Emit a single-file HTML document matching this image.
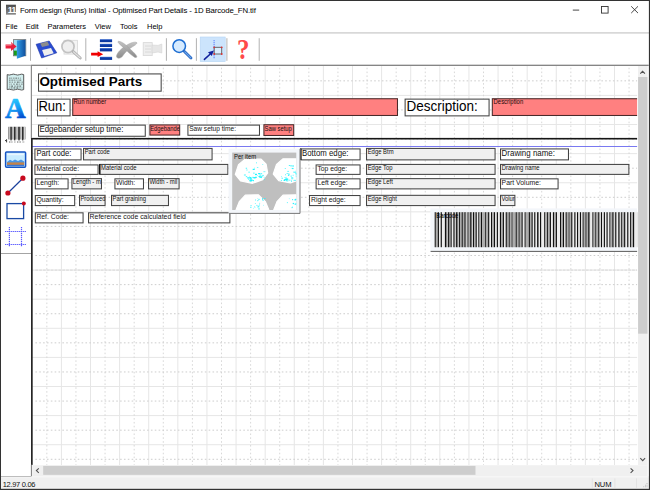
<!DOCTYPE html>
<html><head><meta charset="utf-8"><title>Form design (Runs) Initial - Optimised Part Details</title>
<style>
html,body{margin:0;padding:0;width:650px;height:490px;overflow:hidden;background:#fff;}
svg{display:block;position:absolute;left:0;top:0;font-family:"Liberation Sans",sans-serif;}
text{white-space:pre;}
</style></head><body>

<svg width="650" height="490" viewBox="0 0 650 490">
<defs>
<linearGradient id="gdoor" x1="0" y1="0" x2="1" y2="0"><stop offset="0" stop-color="#2f9ce6"/><stop offset="1" stop-color="#12509e"/></linearGradient>
<linearGradient id="gA" gradientUnits="userSpaceOnUse" x1="10" y1="98" x2="18" y2="118.5"><stop offset="0" stop-color="#2cd0ff"/><stop offset="0.55" stop-color="#169cf4"/><stop offset="1" stop-color="#0450d0"/></linearGradient>
<linearGradient id="gico" x1="0" y1="0" x2="0" y2="1"><stop offset="0" stop-color="#4a4a4a"/><stop offset="1" stop-color="#8c8c8c"/></linearGradient>
<linearGradient id="gx" x1="0" y1="0" x2="0" y2="1"><stop offset="0" stop-color="#c4c4c4"/><stop offset="1" stop-color="#8a8a8a"/></linearGradient>
<linearGradient id="gbar" x1="0" y1="0" x2="0" y2="1"><stop offset="0" stop-color="#3a6ad0"/><stop offset="0.4" stop-color="#0c3ca8"/><stop offset="1" stop-color="#0a3498"/></linearGradient>
<clipPath id="canvas"><rect x="32" y="65.5" width="605.6" height="399.4"/></clipPath>
<clipPath id="imgclip"><rect x="232.2" y="152.6" width="64.1" height="57.4"/></clipPath>
</defs>
<rect x="0" y="0" width="650" height="490" fill="#fff"/>
<g clip-path="url(#canvas)">
<g stroke="#e6e6e6" stroke-width="1" fill="none">
<line x1="61.40" y1="66" x2="61.40" y2="465"/>
<line x1="90.51" y1="66" x2="90.51" y2="465"/>
<line x1="119.62" y1="66" x2="119.62" y2="465"/>
<line x1="148.73" y1="66" x2="148.73" y2="465"/>
<line x1="177.84" y1="66" x2="177.84" y2="465"/>
<line x1="206.95" y1="66" x2="206.95" y2="465"/>
<line x1="236.06" y1="66" x2="236.06" y2="465"/>
<line x1="265.17" y1="66" x2="265.17" y2="465"/>
<line x1="294.28" y1="66" x2="294.28" y2="465"/>
<line x1="323.39" y1="66" x2="323.39" y2="465"/>
<line x1="352.50" y1="66" x2="352.50" y2="465"/>
<line x1="381.61" y1="66" x2="381.61" y2="465"/>
<line x1="410.72" y1="66" x2="410.72" y2="465"/>
<line x1="439.83" y1="66" x2="439.83" y2="465"/>
<line x1="468.94" y1="66" x2="468.94" y2="465"/>
<line x1="498.05" y1="66" x2="498.05" y2="465"/>
<line x1="527.16" y1="66" x2="527.16" y2="465"/>
<line x1="556.27" y1="66" x2="556.27" y2="465"/>
<line x1="585.38" y1="66" x2="585.38" y2="465"/>
<line x1="614.49" y1="66" x2="614.49" y2="465"/>
<line x1="32" y1="95.41" x2="638" y2="95.41"/>
<line x1="32" y1="124.52" x2="638" y2="124.52"/>
<line x1="32" y1="153.63" x2="638" y2="153.63"/>
<line x1="32" y1="182.74" x2="638" y2="182.74"/>
<line x1="32" y1="211.85" x2="638" y2="211.85"/>
<line x1="32" y1="240.96" x2="638" y2="240.96"/>
<line x1="32" y1="270.07" x2="638" y2="270.07"/>
<line x1="32" y1="299.18" x2="638" y2="299.18"/>
<line x1="32" y1="328.29" x2="638" y2="328.29"/>
<line x1="32" y1="357.40" x2="638" y2="357.40"/>
<line x1="32" y1="386.51" x2="638" y2="386.51"/>
<line x1="32" y1="415.62" x2="638" y2="415.62"/>
<line x1="32" y1="444.73" x2="638" y2="444.73"/>
</g>
<g stroke="#d8d8d8" stroke-width="1" fill="none" stroke-dasharray="1.6 2.25" stroke-dashoffset="-1.2">
<line x1="46.84" y1="66.5" x2="46.84" y2="465"/>
<line x1="75.95" y1="66.5" x2="75.95" y2="465"/>
<line x1="105.06" y1="66.5" x2="105.06" y2="465"/>
<line x1="134.18" y1="66.5" x2="134.18" y2="465"/>
<line x1="163.29" y1="66.5" x2="163.29" y2="465"/>
<line x1="192.40" y1="66.5" x2="192.40" y2="465"/>
<line x1="221.51" y1="66.5" x2="221.51" y2="465"/>
<line x1="250.62" y1="66.5" x2="250.62" y2="465"/>
<line x1="279.73" y1="66.5" x2="279.73" y2="465"/>
<line x1="308.84" y1="66.5" x2="308.84" y2="465"/>
<line x1="337.95" y1="66.5" x2="337.95" y2="465"/>
<line x1="367.06" y1="66.5" x2="367.06" y2="465"/>
<line x1="396.17" y1="66.5" x2="396.17" y2="465"/>
<line x1="425.28" y1="66.5" x2="425.28" y2="465"/>
<line x1="454.39" y1="66.5" x2="454.39" y2="465"/>
<line x1="483.50" y1="66.5" x2="483.50" y2="465"/>
<line x1="512.61" y1="66.5" x2="512.61" y2="465"/>
<line x1="541.72" y1="66.5" x2="541.72" y2="465"/>
<line x1="570.83" y1="66.5" x2="570.83" y2="465"/>
<line x1="599.94" y1="66.5" x2="599.94" y2="465"/>
<line x1="629.05" y1="66.5" x2="629.05" y2="465"/>
</g>
<g stroke="#cdcdcd" stroke-width="1" fill="none" stroke-dasharray="1.6 2.25" stroke-dashoffset="-1.2">
<line x1="34.2" y1="80.85" x2="638" y2="80.85"/>
<line x1="34.2" y1="109.96" x2="638" y2="109.96"/>
<line x1="34.2" y1="139.07" x2="638" y2="139.07"/>
<line x1="34.2" y1="168.19" x2="638" y2="168.19"/>
<line x1="34.2" y1="197.30" x2="638" y2="197.30"/>
<line x1="34.2" y1="226.41" x2="638" y2="226.41"/>
<line x1="34.2" y1="255.52" x2="638" y2="255.52"/>
<line x1="34.2" y1="284.63" x2="638" y2="284.63"/>
<line x1="34.2" y1="313.74" x2="638" y2="313.74"/>
<line x1="34.2" y1="342.85" x2="638" y2="342.85"/>
<line x1="34.2" y1="371.96" x2="638" y2="371.96"/>
<line x1="34.2" y1="401.07" x2="638" y2="401.07"/>
<line x1="34.2" y1="430.18" x2="638" y2="430.18"/>
<line x1="34.2" y1="459.29" x2="638" y2="459.29"/>
<line x1="34.2" y1="270.07" x2="638" y2="270.07" stroke="#c4c4c4" stroke-width="0.6" stroke-dasharray="2.6 1.25"/>
</g>
<rect x="38.52" y="73.93" width="122.65" height="17.25" fill="#fff" stroke="#444" stroke-width="1.05"/>
<text transform="translate(39.40 85.80) scale(0.988 1)" font-size="13.6" fill="#000" font-weight="bold">Optimised Parts</text>
<rect x="37.52" y="99.12" width="32.55" height="16.75" fill="#fff" stroke="#444" stroke-width="1.05"/>
<text transform="translate(38.40 110.90) scale(0.94 1)" font-size="13.9" fill="#000">Run:</text>
<rect x="72.73" y="98.73" width="324.75" height="16.75" fill="#ff8080" stroke="#4a2a2a" stroke-width="1.05"/>
<text transform="translate(73.60 103.80) scale(0.94 1)" font-size="6.3" fill="#200808">Run number</text>
<rect x="405.12" y="99.12" width="83.95" height="16.75" fill="#fff" stroke="#444" stroke-width="1.05"/>
<text transform="translate(406.60 110.90) scale(0.968 1)" font-size="13.95" fill="#000">Description:</text>
<rect x="492.32" y="98.73" width="167.15" height="16.75" fill="#ff8080" stroke="#4a2a2a" stroke-width="1.05"/>
<text transform="translate(493.60 103.80) scale(0.94 1)" font-size="6.3" fill="#200808">Description</text>
<rect x="38.52" y="125.12" width="106.75" height="11.15" fill="#fff" stroke="#444" stroke-width="1.05"/>
<text transform="translate(39.40 131.90) scale(0.93 1)" font-size="8.53" fill="#111">Edgebander setup time:</text>
<rect x="149.93" y="124.92" width="29.75" height="10.15" fill="#ff8080" stroke="#4a2a2a" stroke-width="1.05"/>
<clipPath id="c1"><rect x="150.4" y="124.6" width="29.20" height="10.599999999999994"/></clipPath>
<g clip-path="url(#c1)">
<text transform="translate(150.20 130.60) scale(0.93 1)" font-size="6.29" fill="#101010">Edgebande</text>
</g>
<rect x="187.93" y="125.12" width="71.55" height="10.15" fill="#fff" stroke="#444" stroke-width="1.05"/>
<text transform="translate(189.20 130.60) scale(0.97 1)" font-size="6.8" fill="#151515">Saw setup time:</text>
<rect x="263.92" y="124.73" width="29.75" height="10.75" fill="#ff8080" stroke="#4a2a2a" stroke-width="1.05"/>
<clipPath id="c2"><rect x="264.4" y="124.4" width="29.20" height="11.199999999999989"/></clipPath>
<g clip-path="url(#c2)">
<text transform="translate(264.50 130.60) scale(0.93 1)" font-size="6.29" fill="#101010">Saw setup</text>
</g>
<rect x="32" y="137.9" width="606" height="1.6" fill="#161616"/>
<rect x="32" y="146.1" width="606" height="0.9" fill="#6a6af0"/>
<rect x="34.92" y="148.93" width="46.15" height="10.95" fill="#fff" stroke="#444" stroke-width="1.05"/>
<text transform="translate(36.40 155.90) scale(0.93 1)" font-size="8.28" fill="#111">Part code:</text>
<rect x="83.53" y="148.43" width="128.55" height="11.45" fill="#f0f0f0" stroke="#444" stroke-width="1.05"/>
<clipPath id="c3"><rect x="84" y="148.1" width="128.00" height="11.900000000000006"/></clipPath>
<g clip-path="url(#c3)">
<text transform="translate(84.70 153.70) scale(0.93 1)" font-size="6.34" fill="#101010">Part code</text>
</g>
<rect x="34.92" y="164.93" width="63.15" height="9.45" fill="#fff" stroke="#444" stroke-width="1.05"/>
<text transform="translate(36.40 171.00) scale(0.97 1)" font-size="7.01" fill="#151515">Material code:</text>
<rect x="99.93" y="164.43" width="127.95" height="9.95" fill="#f0f0f0" stroke="#444" stroke-width="1.05"/>
<clipPath id="c4"><rect x="100.4" y="164.1" width="127.40" height="10.400000000000006"/></clipPath>
<g clip-path="url(#c4)">
<text transform="translate(101.10 169.70) scale(0.93 1)" font-size="6.34" fill="#101010">Material code</text>
</g>
<rect x="99" y="164.1" width="1.3" height="10.4" fill="#111"/>
<rect x="35.32" y="178.83" width="32.75" height="10.05" fill="#fff" stroke="#444" stroke-width="1.05"/>
<text transform="translate(36.40 184.70) scale(0.97 1)" font-size="7.01" fill="#151515">Length:</text>
<rect x="71.93" y="178.63" width="29.55" height="10.25" fill="#f0f0f0" stroke="#444" stroke-width="1.05"/>
<clipPath id="c5"><rect x="72.4" y="178.3" width="29.00" height="10.699999999999989"/></clipPath>
<g clip-path="url(#c5)">
<text transform="translate(72.70 183.90) scale(0.93 1)" font-size="6.34" fill="#101010">Length - m</text>
</g>
<rect x="114.93" y="178.83" width="28.55" height="10.05" fill="#fff" stroke="#444" stroke-width="1.05"/>
<text transform="translate(116.00 184.70) scale(0.97 1)" font-size="7.01" fill="#151515">Width:</text>
<rect x="148.53" y="178.63" width="30.55" height="10.25" fill="#f0f0f0" stroke="#444" stroke-width="1.05"/>
<clipPath id="c6"><rect x="149" y="178.3" width="30.00" height="10.699999999999989"/></clipPath>
<g clip-path="url(#c6)">
<text transform="translate(149.50 183.90) scale(0.93 1)" font-size="6.34" fill="#101010">Width - mil</text>
</g>
<rect x="35.32" y="195.53" width="39.35" height="10.05" fill="#fff" stroke="#444" stroke-width="1.05"/>
<text transform="translate(36.40 201.60) scale(0.97 1)" font-size="7.01" fill="#151515">Quantity:</text>
<rect x="79.53" y="195.33" width="25.55" height="10.25" fill="#f0f0f0" stroke="#444" stroke-width="1.05"/>
<clipPath id="c7"><rect x="80" y="195" width="25.00" height="10.699999999999989"/></clipPath>
<g clip-path="url(#c7)">
<text transform="translate(80.40 200.60) scale(0.93 1)" font-size="6.34" fill="#101010">Produced</text>
</g>
<rect x="111.53" y="195.33" width="56.95" height="10.25" fill="#f0f0f0" stroke="#444" stroke-width="1.05"/>
<clipPath id="c8"><rect x="112" y="195" width="56.40" height="10.699999999999989"/></clipPath>
<g clip-path="url(#c8)">
<text transform="translate(112.60 200.60) scale(0.93 1)" font-size="6.34" fill="#101010">Part graining</text>
</g>
<rect x="35.32" y="212.83" width="47.75" height="10.05" fill="#fff" stroke="#444" stroke-width="1.05"/>
<text transform="translate(36.40 218.70) scale(0.97 1)" font-size="7.01" fill="#151515">Ref. Code:</text>
<rect x="88.53" y="212.83" width="141.35" height="10.05" fill="#fff" stroke="#444" stroke-width="1.05"/>
<text transform="translate(89.60 218.70) scale(0.97 1)" font-size="7.11" fill="#151515">Reference code calculated field</text>
<rect x="300.92" y="148.93" width="59.15" height="10.95" fill="#fff" stroke="#444" stroke-width="1.05"/>
<text transform="translate(302.00 155.90) scale(0.93 1)" font-size="8.42" fill="#111">Bottom edge:</text>
<rect x="299.9" y="148.4" width="1.5" height="11.6" fill="#111"/>
<rect x="366.52" y="148.43" width="128.55" height="11.45" fill="#f0f0f0" stroke="#444" stroke-width="1.05"/>
<clipPath id="c9"><rect x="367" y="148.1" width="128.00" height="11.900000000000006"/></clipPath>
<g clip-path="url(#c9)">
<text transform="translate(367.70 153.70) scale(0.93 1)" font-size="6.34" fill="#101010">Edge Btm</text>
</g>
<rect x="316.12" y="164.93" width="43.95" height="9.45" fill="#fff" stroke="#444" stroke-width="1.05"/>
<text transform="translate(317.40 171.00) scale(0.97 1)" font-size="7.01" fill="#151515">Top edge:</text>
<rect x="366.52" y="164.43" width="128.55" height="9.95" fill="#f0f0f0" stroke="#444" stroke-width="1.05"/>
<clipPath id="c10"><rect x="367" y="164.1" width="128.00" height="10.400000000000006"/></clipPath>
<g clip-path="url(#c10)">
<text transform="translate(367.70 169.70) scale(0.93 1)" font-size="6.34" fill="#101010">Edge Top</text>
</g>
<rect x="316.12" y="178.83" width="43.95" height="10.05" fill="#fff" stroke="#444" stroke-width="1.05"/>
<text transform="translate(317.40 184.70) scale(0.97 1)" font-size="7.01" fill="#151515">Left edge:</text>
<rect x="366.52" y="178.63" width="128.55" height="10.25" fill="#f0f0f0" stroke="#444" stroke-width="1.05"/>
<clipPath id="c11"><rect x="367" y="178.3" width="128.00" height="10.699999999999989"/></clipPath>
<g clip-path="url(#c11)">
<text transform="translate(367.70 183.90) scale(0.93 1)" font-size="6.34" fill="#101010">Edge Left</text>
</g>
<rect x="309.52" y="195.53" width="50.55" height="10.05" fill="#fff" stroke="#444" stroke-width="1.05"/>
<text transform="translate(311.00 201.60) scale(0.97 1)" font-size="7.01" fill="#151515">Right edge:</text>
<rect x="366.52" y="195.33" width="128.55" height="10.25" fill="#f0f0f0" stroke="#444" stroke-width="1.05"/>
<clipPath id="c12"><rect x="367" y="195" width="128.00" height="10.699999999999989"/></clipPath>
<g clip-path="url(#c12)">
<text transform="translate(367.70 200.60) scale(0.93 1)" font-size="6.34" fill="#101010">Edge Right</text>
</g>
<rect x="500.52" y="148.93" width="67.95" height="10.95" fill="#fff" stroke="#444" stroke-width="1.05"/>
<text transform="translate(501.60 155.90) scale(0.93 1)" font-size="8.54" fill="#111">Drawing name:</text>
<rect x="500.52" y="164.43" width="128.35" height="9.95" fill="#f0f0f0" stroke="#444" stroke-width="1.05"/>
<clipPath id="c13"><rect x="501" y="164.1" width="127.80" height="10.400000000000006"/></clipPath>
<g clip-path="url(#c13)">
<text transform="translate(501.70 169.70) scale(0.93 1)" font-size="6.34" fill="#101010">Drawing name</text>
</g>
<rect x="500.52" y="178.83" width="57.55" height="10.05" fill="#fff" stroke="#444" stroke-width="1.05"/>
<text transform="translate(501.60 184.70) scale(0.97 1)" font-size="7.09" fill="#151515">Part Volume:</text>
<rect x="500.52" y="195.33" width="14.35" height="10.25" fill="#f0f0f0" stroke="#444" stroke-width="1.05"/>
<clipPath id="c14"><rect x="501" y="195" width="13.80" height="10.699999999999989"/></clipPath>
<g clip-path="url(#c14)">
<text transform="translate(501.40 200.60) scale(0.93 1)" font-size="6.34" fill="#101010">Volur</text>
</g>
<rect x="228.6" y="148.7" width="71.7" height="65.1" fill="#f3f6fa"/>
<path d="M229 213.4 H300 V149" fill="none" stroke="#6a6a6a" stroke-width="0.9"/>
<rect x="232.2" y="152.6" width="64.1" height="57.4" fill="#bfbfbf"/>
<g clip-path="url(#imgclip)">
<path d="M235.3 174.4 L238.5 164.8 L245.1 159.2 L261.1 159.2 L266.1 164.1 L267.7 173.0 L262.8 179.6 L252.5 183.3 L240.7 181.0Z" fill="#fff" stroke="#fff" stroke-width="1.2" stroke-linejoin="round"/>
<g fill="#20f4ff"><rect x="248.6" y="178.8" width="0.9" height="0.6"/><rect x="261.2" y="177.3" width="0.6" height="0.8"/><rect x="248.6" y="171.6" width="0.9" height="1.2"/><rect x="249.3" y="177.2" width="1.4" height="1.2"/><rect x="255.0" y="176.9" width="2.0" height="0.8"/><rect x="263.4" y="171.5" width="2.0" height="0.6"/><rect x="249.0" y="175.9" width="0.6" height="0.6"/><rect x="253.2" y="172.7" width="1.4" height="0.8"/><rect x="246.2" y="169.7" width="1.4" height="0.6"/><rect x="254.1" y="177.1" width="2.0" height="1.2"/><rect x="258.1" y="173.2" width="0.9" height="0.8"/><rect x="245.8" y="176.3" width="1.4" height="0.8"/><rect x="250.1" y="180.1" width="2.0" height="1.2"/><rect x="262.7" y="174.9" width="0.9" height="0.8"/><rect x="243.9" y="174.6" width="2.0" height="0.8"/><rect x="251.4" y="179.1" width="0.9" height="1.2"/><rect x="260.1" y="176.5" width="2.0" height="1.2"/><rect x="256.4" y="162.2" width="0.6" height="1.2"/><rect x="248.3" y="179.3" width="0.9" height="0.6"/><rect x="257.4" y="175.1" width="0.6" height="0.6"/><rect x="254.0" y="167.7" width="0.6" height="0.8"/><rect x="250.6" y="179.3" width="0.9" height="0.8"/><rect x="259.0" y="173.4" width="0.9" height="0.6"/><rect x="256.9" y="167.4" width="1.4" height="0.6"/><rect x="247.2" y="177.3" width="2.0" height="1.2"/><rect x="261.3" y="173.5" width="0.9" height="0.8"/><rect x="259.3" y="176.4" width="0.9" height="0.8"/><rect x="249.5" y="177.4" width="1.4" height="0.8"/><rect x="259.1" y="177.2" width="0.6" height="0.8"/><rect x="253.6" y="178.4" width="0.9" height="0.6"/><rect x="259.5" y="176.0" width="0.9" height="0.8"/><rect x="252.5" y="176.8" width="0.9" height="1.2"/><rect x="250.1" y="177.4" width="0.9" height="1.2"/><rect x="261.5" y="176.2" width="0.9" height="0.8"/><rect x="252.7" y="168.8" width="2.0" height="1.2"/><rect x="253.0" y="180.0" width="0.9" height="1.2"/><rect x="259.6" y="174.7" width="1.4" height="0.8"/><rect x="245.7" y="167.8" width="1.4" height="0.8"/><rect x="249.4" y="180.6" width="2.0" height="0.8"/><rect x="258.9" y="175.7" width="0.6" height="1.2"/><rect x="255.0" y="173.8" width="2.0" height="1.2"/><rect x="250.8" y="180.2" width="2.0" height="0.8"/><rect x="263.7" y="176.9" width="0.9" height="0.6"/><rect x="258.5" y="173.1" width="2.0" height="1.2"/><rect x="250.0" y="177.6" width="2.0" height="0.6"/><rect x="255.7" y="175.6" width="0.6" height="0.8"/><rect x="253.1" y="177.2" width="2.0" height="0.8"/><rect x="250.7" y="178.4" width="1.4" height="0.6"/><rect x="261.6" y="175.5" width="2.0" height="0.6"/><rect x="263.9" y="178.9" width="0.6" height="1.2"/><rect x="249.4" y="180.1" width="1.4" height="0.8"/><rect x="260.5" y="176.8" width="0.9" height="1.2"/><rect x="262.3" y="164.2" width="0.9" height="0.6"/><rect x="250.1" y="179.3" width="0.9" height="0.8"/><rect x="261.0" y="173.1" width="0.6" height="0.8"/><rect x="258.3" y="176.1" width="2.0" height="0.6"/></g>
<path d="M273.3 174.0 L276.5 164.4 L283.1 158.8 L299.1 158.8 L304.1 163.7 L305.7 172.6 L300.8 179.2 L290.5 182.9 L278.7 180.6Z" fill="#fff" stroke="#fff" stroke-width="1.2" stroke-linejoin="round"/>
<g fill="#20f4ff"><rect x="286.2" y="178.4" width="1.4" height="0.6"/><rect x="296.4" y="176.1" width="0.6" height="0.8"/><rect x="292.4" y="165.4" width="1.4" height="1.2"/><rect x="284.8" y="179.1" width="1.4" height="1.2"/><rect x="297.2" y="174.4" width="2.0" height="0.6"/><rect x="286.5" y="173.3" width="2.0" height="0.6"/><rect x="290.5" y="175.7" width="1.4" height="0.8"/><rect x="301.0" y="176.9" width="0.9" height="1.2"/><rect x="288.5" y="179.8" width="2.0" height="0.6"/><rect x="281.7" y="177.7" width="0.9" height="1.2"/><rect x="294.6" y="172.1" width="2.0" height="0.6"/><rect x="287.4" y="170.9" width="1.4" height="0.8"/><rect x="285.2" y="179.0" width="2.0" height="1.2"/><rect x="299.0" y="174.4" width="0.6" height="0.6"/><rect x="284.8" y="168.2" width="0.9" height="0.8"/><rect x="286.3" y="180.7" width="2.0" height="0.6"/><rect x="298.1" y="174.8" width="0.6" height="0.8"/><rect x="291.1" y="177.6" width="2.0" height="0.6"/><rect x="291.3" y="177.7" width="2.0" height="0.8"/><rect x="299.6" y="176.0" width="1.4" height="0.6"/><rect x="295.4" y="170.8" width="0.6" height="0.8"/><rect x="286.9" y="178.8" width="0.9" height="1.2"/><rect x="296.9" y="175.7" width="0.6" height="1.2"/><rect x="285.1" y="174.4" width="0.9" height="0.8"/><rect x="284.3" y="179.4" width="0.6" height="0.8"/><rect x="295.4" y="173.4" width="2.0" height="0.6"/><rect x="293.7" y="179.8" width="0.9" height="1.2"/><rect x="286.3" y="178.1" width="0.9" height="0.6"/><rect x="295.7" y="176.4" width="0.6" height="0.8"/><rect x="287.9" y="174.6" width="1.4" height="1.2"/><rect x="297.0" y="172.3" width="0.9" height="0.6"/><rect x="288.6" y="173.6" width="0.9" height="1.2"/><rect x="284.4" y="179.0" width="0.9" height="0.8"/><rect x="302.0" y="171.4" width="2.0" height="1.2"/><rect x="283.6" y="179.8" width="1.4" height="1.2"/><rect x="284.6" y="177.1" width="0.9" height="0.8"/><rect x="295.7" y="173.2" width="2.0" height="1.2"/><rect x="299.5" y="173.0" width="2.0" height="0.8"/><rect x="285.1" y="178.5" width="0.9" height="0.6"/><rect x="297.6" y="173.5" width="0.6" height="0.6"/><rect x="281.0" y="176.3" width="0.6" height="0.8"/><rect x="299.2" y="173.7" width="2.0" height="1.2"/><rect x="290.2" y="165.5" width="2.0" height="0.8"/><rect x="286.4" y="179.8" width="0.9" height="1.2"/><rect x="295.1" y="179.8" width="0.6" height="1.2"/><rect x="293.2" y="171.7" width="2.0" height="0.8"/><rect x="291.0" y="180.5" width="0.9" height="1.2"/><rect x="295.8" y="174.0" width="2.0" height="0.6"/><rect x="288.8" y="165.0" width="1.4" height="0.8"/><rect x="280.9" y="180.2" width="0.9" height="0.8"/><rect x="299.7" y="173.0" width="2.0" height="0.6"/><rect x="291.7" y="179.4" width="0.6" height="0.6"/><rect x="285.8" y="176.9" width="0.9" height="0.6"/><rect x="292.7" y="174.8" width="0.9" height="0.8"/><rect x="292.1" y="167.9" width="1.4" height="1.2"/><rect x="287.6" y="178.8" width="0.9" height="0.6"/><rect x="295.7" y="174.9" width="0.9" height="0.6"/><rect x="290.9" y="167.9" width="0.6" height="0.6"/></g>
<path d="M236.1 209.6 L239.3 201.6 L245.3 195.2 L258.3 194.8 L262.3 198.6 L265.3 201.6 L268.7 209.6 L268.7 214.6 L236.1 214.6Z" fill="#fff" stroke="#fff" stroke-width="1.2" stroke-linejoin="round"/>
<g fill="#22f0ff"><rect x="257.4" y="206.6" width="0.9" height="0.8"/><rect x="254.2" y="206.4" width="0.6" height="0.8"/><rect x="259.0" y="198.9" width="0.9" height="0.6"/><rect x="262.1" y="198.3" width="0.9" height="1.2"/><rect x="250.1" y="206.8" width="1.4" height="0.8"/><rect x="259.1" y="204.4" width="0.6" height="1.2"/><rect x="262.0" y="198.4" width="0.6" height="1.2"/><rect x="258.4" y="199.2" width="0.6" height="1.2"/><rect x="257.6" y="198.0" width="0.6" height="0.6"/><rect x="257.5" y="200.0" width="0.6" height="1.2"/><rect x="254.7" y="206.8" width="0.6" height="0.8"/><rect x="258.3" y="208.6" width="1.4" height="0.8"/><rect x="250.6" y="205.2" width="0.9" height="0.8"/><rect x="253.2" y="207.9" width="0.6" height="0.6"/><rect x="254.9" y="203.3" width="0.9" height="0.6"/><rect x="258.0" y="206.4" width="1.4" height="0.8"/><rect x="257.6" y="205.5" width="0.9" height="0.8"/><rect x="264.1" y="198.1" width="1.4" height="0.8"/><rect x="256.4" y="204.9" width="0.9" height="0.8"/><rect x="263.2" y="204.9" width="0.6" height="0.6"/><rect x="258.7" y="207.9" width="0.6" height="0.6"/><rect x="262.6" y="199.7" width="0.9" height="1.2"/><rect x="255.1" y="199.6" width="0.9" height="0.8"/><rect x="259.2" y="202.9" width="0.9" height="0.6"/></g>
<path d="M273.8 209.6 L277.0 201.6 L283.0 195.2 L296.0 194.8 L300.0 198.6 L303.0 201.6 L306.4 209.6 L306.4 214.6 L273.8 214.6Z" fill="#fff" stroke="#fff" stroke-width="1.2" stroke-linejoin="round"/>
<g fill="#22f0ff"><rect x="295.0" y="203.8" width="0.9" height="0.6"/><rect x="296.7" y="199.1" width="0.6" height="1.2"/><rect x="294.7" y="199.4" width="0.9" height="1.2"/><rect x="301.0" y="199.2" width="1.4" height="1.2"/><rect x="296.6" y="201.3" width="1.4" height="0.8"/><rect x="286.9" y="202.3" width="0.9" height="0.8"/><rect x="288.9" y="198.5" width="0.6" height="0.6"/><rect x="292.2" y="199.0" width="0.9" height="1.2"/><rect x="294.7" y="199.1" width="0.9" height="1.2"/><rect x="296.4" y="204.5" width="0.9" height="0.8"/><rect x="295.7" y="202.8" width="0.9" height="1.2"/><rect x="299.7" y="202.3" width="0.9" height="0.6"/><rect x="292.7" y="202.9" width="1.4" height="1.2"/><rect x="299.4" y="206.7" width="1.4" height="0.8"/><rect x="297.1" y="202.3" width="0.9" height="0.6"/><rect x="295.2" y="198.8" width="1.4" height="1.2"/><rect x="294.7" y="203.7" width="0.9" height="1.2"/><rect x="292.2" y="206.6" width="0.6" height="1.2"/><rect x="291.3" y="207.5" width="1.4" height="0.6"/><rect x="300.2" y="201.6" width="0.9" height="0.8"/><rect x="296.6" y="203.6" width="1.4" height="0.8"/></g>
</g>
<text transform="translate(234.10 158.50) scale(0.93 1)" font-size="6.4" fill="#101010">Per item</text>
<rect x="430.4" y="208.4" width="208" height="43.2" fill="#f3f6fa"/>
<rect x="430.6" y="250.9" width="208" height="1" fill="#5c5c5c"/>
<rect x="434.6" y="212.2" width="204" height="35" fill="#ececec"/>
<g><rect x="434.70" y="212.2" width="1.15" height="35" fill="#101010"/><rect x="435.85" y="212.2" width="1.95" height="35" fill="#acacac"/><rect x="437.80" y="212.2" width="1.15" height="35" fill="#101010"/><rect x="440.70" y="212.2" width="1.15" height="35" fill="#101010"/><rect x="444.90" y="212.2" width="1.15" height="35" fill="#101010"/><rect x="446.05" y="212.2" width="0.7" height="35" fill="#606060"/><rect x="447.80" y="212.2" width="1.15" height="35" fill="#101010"/><rect x="448.95" y="212.2" width="0.7" height="35" fill="#606060"/><rect x="450.50" y="212.2" width="1.15" height="35" fill="#101010"/><rect x="453.40" y="212.2" width="1.15" height="35" fill="#101010"/><rect x="454.55" y="212.2" width="0.7" height="35" fill="#606060"/><rect x="456.10" y="212.2" width="1.15" height="35" fill="#101010"/><rect x="457.25" y="212.2" width="0.7" height="35" fill="#606060"/><rect x="458.80" y="212.2" width="1.15" height="35" fill="#101010"/><rect x="459.95" y="212.2" width="1.75" height="35" fill="#acacac"/><rect x="461.70" y="212.2" width="1.15" height="35" fill="#101010"/><rect x="462.85" y="212.2" width="1.55" height="35" fill="#acacac"/><rect x="464.40" y="212.2" width="1.15" height="35" fill="#101010"/><rect x="465.55" y="212.2" width="0.7" height="35" fill="#606060"/><rect x="467.50" y="212.2" width="1.15" height="35" fill="#101010"/><rect x="468.65" y="212.2" width="1.55" height="35" fill="#acacac"/><rect x="470.20" y="212.2" width="1.15" height="35" fill="#101010"/><rect x="471.35" y="212.2" width="0.7" height="35" fill="#606060"/><rect x="472.90" y="212.2" width="1.15" height="35" fill="#101010"/><rect x="474.05" y="212.2" width="1.55" height="35" fill="#acacac"/><rect x="475.60" y="212.2" width="1.15" height="35" fill="#101010"/><rect x="478.30" y="212.2" width="1.15" height="35" fill="#101010"/><rect x="479.45" y="212.2" width="1.55" height="35" fill="#acacac"/><rect x="481.00" y="212.2" width="1.15" height="35" fill="#101010"/><rect x="482.15" y="212.2" width="3.05" height="35" fill="#acacac"/><rect x="485.20" y="212.2" width="1.15" height="35" fill="#101010"/><rect x="486.35" y="212.2" width="1.75" height="35" fill="#acacac"/><rect x="488.10" y="212.2" width="1.15" height="35" fill="#101010"/><rect x="491.00" y="212.2" width="1.15" height="35" fill="#101010"/><rect x="492.15" y="212.2" width="1.75" height="35" fill="#acacac"/><rect x="493.90" y="212.2" width="1.15" height="35" fill="#101010"/><rect x="496.80" y="212.2" width="1.15" height="35" fill="#101010"/><rect x="499.90" y="212.2" width="1.15" height="35" fill="#101010"/><rect x="501.05" y="212.2" width="1.75" height="35" fill="#acacac"/><rect x="502.80" y="212.2" width="1.15" height="35" fill="#101010"/><rect x="505.70" y="212.2" width="1.15" height="35" fill="#101010"/><rect x="506.85" y="212.2" width="0.7" height="35" fill="#606060"/><rect x="508.60" y="212.2" width="1.15" height="35" fill="#101010"/><rect x="509.75" y="212.2" width="0.7" height="35" fill="#606060"/><rect x="511.50" y="212.2" width="1.15" height="35" fill="#101010"/><rect x="512.65" y="212.2" width="3.05" height="35" fill="#acacac"/><rect x="515.70" y="212.2" width="1.15" height="35" fill="#101010"/><rect x="516.85" y="212.2" width="1.75" height="35" fill="#acacac"/><rect x="518.60" y="212.2" width="1.15" height="35" fill="#101010"/><rect x="519.75" y="212.2" width="1.75" height="35" fill="#acacac"/><rect x="521.50" y="212.2" width="1.15" height="35" fill="#101010"/><rect x="524.60" y="212.2" width="1.15" height="35" fill="#101010"/><rect x="525.75" y="212.2" width="3.05" height="35" fill="#acacac"/><rect x="528.80" y="212.2" width="1.15" height="35" fill="#101010"/><rect x="529.95" y="212.2" width="1.55" height="35" fill="#acacac"/><rect x="531.50" y="212.2" width="1.15" height="35" fill="#101010"/><rect x="534.20" y="212.2" width="1.15" height="35" fill="#101010"/><rect x="537.10" y="212.2" width="1.15" height="35" fill="#101010"/><rect x="538.25" y="212.2" width="0.7" height="35" fill="#606060"/><rect x="540.00" y="212.2" width="1.15" height="35" fill="#101010"/><rect x="544.20" y="212.2" width="1.15" height="35" fill="#101010"/><rect x="545.35" y="212.2" width="1.75" height="35" fill="#acacac"/><rect x="547.10" y="212.2" width="1.15" height="35" fill="#101010"/><rect x="548.25" y="212.2" width="1.55" height="35" fill="#acacac"/><rect x="549.80" y="212.2" width="1.15" height="35" fill="#101010"/><rect x="552.90" y="212.2" width="1.15" height="35" fill="#101010"/><rect x="554.05" y="212.2" width="1.75" height="35" fill="#acacac"/><rect x="555.80" y="212.2" width="1.15" height="35" fill="#101010"/><rect x="560.00" y="212.2" width="1.15" height="35" fill="#101010"/><rect x="561.15" y="212.2" width="1.75" height="35" fill="#acacac"/><rect x="562.90" y="212.2" width="1.15" height="35" fill="#101010"/><rect x="565.60" y="212.2" width="1.15" height="35" fill="#101010"/><rect x="566.75" y="212.2" width="0.7" height="35" fill="#606060"/><rect x="568.50" y="212.2" width="1.15" height="35" fill="#101010"/><rect x="569.65" y="212.2" width="1.55" height="35" fill="#acacac"/><rect x="571.20" y="212.2" width="1.15" height="35" fill="#101010"/><rect x="574.30" y="212.2" width="1.15" height="35" fill="#101010"/><rect x="577.00" y="212.2" width="1.15" height="35" fill="#101010"/><rect x="579.90" y="212.2" width="1.15" height="35" fill="#101010"/><rect x="582.60" y="212.2" width="1.15" height="35" fill="#101010"/><rect x="583.75" y="212.2" width="1.75" height="35" fill="#acacac"/><rect x="585.50" y="212.2" width="1.15" height="35" fill="#101010"/><rect x="586.65" y="212.2" width="1.55" height="35" fill="#acacac"/><rect x="588.20" y="212.2" width="1.15" height="35" fill="#101010"/><rect x="589.35" y="212.2" width="0.7" height="35" fill="#606060"/><rect x="592.40" y="212.2" width="1.15" height="35" fill="#101010"/><rect x="593.55" y="212.2" width="1.75" height="35" fill="#acacac"/><rect x="595.30" y="212.2" width="1.15" height="35" fill="#101010"/><rect x="596.45" y="212.2" width="1.75" height="35" fill="#acacac"/><rect x="598.20" y="212.2" width="1.15" height="35" fill="#101010"/><rect x="600.90" y="212.2" width="1.15" height="35" fill="#101010"/><rect x="603.80" y="212.2" width="1.15" height="35" fill="#101010"/><rect x="606.50" y="212.2" width="1.15" height="35" fill="#101010"/><rect x="609.40" y="212.2" width="1.15" height="35" fill="#101010"/><rect x="610.55" y="212.2" width="1.75" height="35" fill="#acacac"/><rect x="612.30" y="212.2" width="1.15" height="35" fill="#101010"/><rect x="613.45" y="212.2" width="0.7" height="35" fill="#606060"/><rect x="615.20" y="212.2" width="1.15" height="35" fill="#101010"/><rect x="618.30" y="212.2" width="1.15" height="35" fill="#101010"/><rect x="619.45" y="212.2" width="0.7" height="35" fill="#606060"/><rect x="621.20" y="212.2" width="1.15" height="35" fill="#101010"/><rect x="622.35" y="212.2" width="1.75" height="35" fill="#acacac"/><rect x="624.10" y="212.2" width="1.15" height="35" fill="#101010"/><rect x="627.20" y="212.2" width="1.15" height="35" fill="#101010"/><rect x="630.10" y="212.2" width="1.15" height="35" fill="#101010"/><rect x="631.25" y="212.2" width="1.75" height="35" fill="#acacac"/><rect x="633.00" y="212.2" width="1.15" height="35" fill="#101010"/><rect x="637.20" y="212.2" width="1.15" height="35" fill="#101010"/></g>
<text transform="translate(436.20 218.20) scale(0.93 1)" font-size="6.4" fill="#000">Barcode</text>
</g>
<rect x="30.8" y="65.6" width="1.2" height="73" fill="#8c8c8c"/>
<rect x="31" y="138" width="1.7" height="326.9" fill="#262626"/>
<rect x="30.9" y="464.9" width="1.2" height="11.3" fill="#8a8a8a"/>
<rect x="637.2" y="65.8" width="12" height="400" fill="#fff"/>
<rect x="638" y="66" width="9.6" height="399.2" fill="#f0f0f0"/>
<rect x="638.1" y="77" width="9.4" height="256.7" fill="#cdcdcd"/>
<path d="M640.3 73.6 L642.6 71.3 L644.9 73.6" fill="none" stroke="#505050" stroke-width="1.1"/>
<path d="M640.3 458.2 L642.7 460.6 L645.1 458.2" fill="none" stroke="#505050" stroke-width="1.1"/>
<rect x="32.8" y="465.2" width="614.8" height="10.8" fill="#f0f0f0"/>
<rect x="43.2" y="465.9" width="432.3" height="8.95" fill="#cdcdcd"/>
<path d="M38.8 468.3 L36.4 470.6 L38.8 472.9" fill="none" stroke="#505050" stroke-width="1.1"/>
<path d="M630.6 468.3 L633 470.6 L630.6 472.9" fill="none" stroke="#505050" stroke-width="1.1"/>
<rect x="1" y="476" width="648" height="1.2" fill="#f6f6f6"/>
<rect x="1" y="476" width="30.5" height="0.8" fill="#b0b0b0"/>
<rect x="1" y="477.2" width="648" height="10.7" fill="#f0f0f0"/>
<text x="2.70" y="486.50" font-size="7.5" fill="#111" letter-spacing="-0.3">12.97 0.06</text>
<text x="594.40" y="486.50" font-size="7.6" fill="#111" letter-spacing="-0.1">NUM</text>
<rect x="591.8" y="478.4" width="0.8" height="9.4" fill="#e0e0e0"/>
<rect x="614.5" y="478.4" width="0.8" height="9.4" fill="#e0e0e0"/>
<rect x="636.2" y="478.4" width="0.8" height="9.4" fill="#e0e0e0"/>
<rect x="646.6" y="486.4" width="0.8" height="0.8" fill="#a8a8a8"/>
<rect x="645" y="486.4" width="0.8" height="0.8" fill="#a8a8a8"/>
<rect x="643.4" y="486.4" width="0.8" height="0.8" fill="#a8a8a8"/>
<rect x="646.6" y="484.8" width="0.8" height="0.8" fill="#a8a8a8"/>
<rect x="645" y="484.8" width="0.8" height="0.8" fill="#a8a8a8"/>
<rect x="646.6" y="483.2" width="0.8" height="0.8" fill="#a8a8a8"/>
<rect x="1" y="253" width="30" height="0.9" fill="#9a9a9a"/>
<path d="M7.2 74.6 q2 0.9 4 0 q2.2 -1 4.3 0 q2.1 0.9 4.2 0 q2 -0.9 4 0 V89.6 q-2 0.9 -4 0 q-2.1 -0.9 -4.2 0 q-2.1 0.9 -4.3 0 q-2 -0.9 -4 0 Z" fill="#d2eeee" stroke="#484848" stroke-width="0.9"/>
<rect x="9.2" y="77.6" width="0.8" height="1.1" fill="#6a7474"/><rect x="10.5" y="77.6" width="1.2" height="1.1" fill="#6a7474"/><rect x="12.8" y="77.6" width="1.8" height="1.1" fill="#889494"/><rect x="15.4" y="77.6" width="1.8" height="1.1" fill="#6a7474"/><rect x="18.3" y="77.6" width="0.8" height="1.1" fill="#586262"/><rect x="20.2" y="77.6" width="0.8" height="1.1" fill="#889494"/><rect x="9.2" y="79.6" width="1.2" height="1.1" fill="#586262"/><rect x="11.5" y="79.6" width="1.2" height="1.1" fill="#586262"/><rect x="13.5" y="79.6" width="1.8" height="1.1" fill="#889494"/><rect x="15.8" y="79.6" width="0.8" height="1.1" fill="#889494"/><rect x="17.4" y="79.6" width="1.2" height="1.1" fill="#889494"/><rect x="19.4" y="79.6" width="1.8" height="1.1" fill="#6a7474"/><rect x="9.2" y="81.6" width="0.8" height="1.1" fill="#6a7474"/><rect x="10.5" y="81.6" width="0.8" height="1.1" fill="#6a7474"/><rect x="12.1" y="81.6" width="0.8" height="1.1" fill="#6a7474"/><rect x="14.0" y="81.6" width="1.8" height="1.1" fill="#889494"/><rect x="16.9" y="81.6" width="1.8" height="1.1" fill="#586262"/><rect x="19.2" y="81.6" width="1.2" height="1.1" fill="#889494"/><rect x="21.5" y="81.6" width="1.8" height="1.1" fill="#889494"/><rect x="9.2" y="83.6" width="1.2" height="1.1" fill="#889494"/><rect x="11.2" y="83.6" width="0.8" height="1.1" fill="#889494"/><rect x="13.1" y="83.6" width="1.8" height="1.1" fill="#889494"/><rect x="16.0" y="83.6" width="1.8" height="1.1" fill="#6a7474"/><rect x="18.6" y="83.6" width="1.2" height="1.1" fill="#889494"/><rect x="20.9" y="83.6" width="1.8" height="1.1" fill="#889494"/><rect x="9.2" y="85.6" width="1.2" height="1.1" fill="#889494"/><rect x="11.2" y="85.6" width="1.8" height="1.1" fill="#586262"/><rect x="14.1" y="85.6" width="1.8" height="1.1" fill="#889494"/><rect x="16.7" y="85.6" width="1.8" height="1.1" fill="#6a7474"/><rect x="19.3" y="85.6" width="1.8" height="1.1" fill="#6a7474"/><rect x="9.2" y="87.4" width="1.2" height="1.1" fill="#889494"/><rect x="11.2" y="87.4" width="1.2" height="1.1" fill="#586262"/><rect x="13.5" y="87.4" width="1.8" height="1.1" fill="#586262"/><rect x="16.4" y="87.4" width="1.8" height="1.1" fill="#586262"/><rect x="19.3" y="87.4" width="1.2" height="1.1" fill="#889494"/><rect x="21.6" y="87.4" width="0.8" height="1.1" fill="#889494"/>
<text x="5.1" y="117.8" font-size="28.6" font-weight="bold" font-family='"Liberation Serif",serif' fill="url(#gA)" stroke="url(#gA)" stroke-width="0.7" stroke-linejoin="round">A</text>
<rect x="8" y="126.8" width="17.6" height="12.6" fill="#9a9a9a"/>
<rect x="9.5" y="126.8" width="0.7" height="12.6" fill="#e4e4e4"/>
<rect x="12.7" y="126.8" width="0.8" height="12.6" fill="#e4e4e4"/>
<rect x="16.6" y="126.8" width="0.9" height="12.6" fill="#e4e4e4"/>
<rect x="20.8" y="126.8" width="0.8" height="12.6" fill="#e4e4e4"/>
<rect x="24.2" y="126.8" width="0.8" height="12.6" fill="#e4e4e4"/>
<rect x="10.5" y="126.8" width="1.1" height="13.6" fill="#161616"/>
<rect x="14.2" y="126.8" width="1.1" height="13.6" fill="#161616"/>
<rect x="18.4" y="126.8" width="1.2" height="13.6" fill="#161616"/>
<rect x="22.2" y="126.8" width="1.1" height="13.6" fill="#161616"/>
<path d="M9 142 H12.6 M14.4 142 H16 M17 142 H21 M22.6 142 H24.4" stroke="#555" stroke-width="0.9" stroke-dasharray="1 0.6"/>
<path d="M5 141 L6.6 139.6 V142.4" stroke="#222" stroke-width="0.9" fill="none"/>
<rect x="5.6" y="152.1" width="20" height="15.2" rx="1" fill="#c8ecff" stroke="#1454c4" stroke-width="1.5"/>
<rect x="7.2" y="153.6" width="16.8" height="1.6" fill="#e8f6ff"/>
<path d="M7 162 L10 159.8 L12.4 161 L15 159.4 L18 161 L21 159.6 L24.2 161.6 V163 H7Z" fill="#4a98e8"/>
<rect x="7" y="162.4" width="17.2" height="2.6" fill="#c4844a"/>
<rect x="7" y="164.8" width="17.2" height="1.4" fill="#3a78d8"/>
<line x1="7.9" y1="193" x2="22.9" y2="178.3" stroke="#1a409c" stroke-width="1.2"/>
<circle cx="22.9" cy="178.2" r="2.6" fill="#c80a1e"/><circle cx="7.9" cy="193" r="2.6" fill="#c80a1e"/>
<rect x="7" y="203.6" width="16.6" height="15" fill="#fff" stroke="#1a4aa4" stroke-width="1.3"/>
<circle cx="23.8" cy="203.5" r="2" fill="#c80a1e"/>
<g stroke="#5858ff" stroke-width="1.2" stroke-dasharray="1.3 0.7" fill="none"><path d="M5.1 231.5 H26 M5.1 244.5 H26 M9.4 226.9 V246.8 M21.5 226.9 V246.8"/></g>
<rect x="0" y="32.2" width="650" height="1.4" fill="#cfcfcf"/>
<rect x="0" y="64.8" width="648.6" height="1" fill="#9c9c9c"/>
<rect x="31" y="64.8" width="617.6" height="1" fill="#7c7c7c"/>
<rect x="6" y="4.7" width="9.9" height="10" fill="url(#gico)"/>
<g opacity="0.99"><text x="7.7" y="13.1" font-size="8.8" font-weight="bold" fill="#fff" letter-spacing="-0.6">11</text></g>
<text x="19.90" y="12.75" font-size="7.8" fill="#000" letter-spacing="-0.127">Form design (Runs) Initial - Optimised Part Details - 1D Barcode_FN.tlf</text>
<text x="5.60" y="28.60" font-size="7.5" fill="#000" letter-spacing="-0.03">File</text>
<text x="25.80" y="28.60" font-size="7.5" fill="#000" letter-spacing="-0.03">Edit</text>
<text x="47.50" y="28.60" font-size="7.5" fill="#000" letter-spacing="-0.03">Parameters</text>
<text x="94.80" y="28.60" font-size="7.5" fill="#000" letter-spacing="-0.03">View</text>
<text x="120.00" y="28.60" font-size="7.5" fill="#000" letter-spacing="-0.03">Tools</text>
<text x="147.00" y="28.60" font-size="7.5" fill="#000" letter-spacing="-0.03">Help</text>
<path d="M572.8 10.1 H579.2" stroke="#333" stroke-width="0.9"/>
<rect x="601.5" y="6.5" width="6.6" height="6.6" fill="none" stroke="#333" stroke-width="0.9"/>
<path d="M631.2 6.3 L638 13.1 M638 6.3 L631.2 13.1" stroke="#333" stroke-width="0.9"/>
<rect x="30.0" y="38.2" width="1" height="22.6" fill="#b2b2b2"/>
<rect x="85.3" y="38.2" width="1" height="22.6" fill="#b2b2b2"/>
<rect x="165.9" y="38.2" width="1" height="22.6" fill="#b2b2b2"/>
<rect x="195.9" y="38.2" width="1" height="22.6" fill="#b2b2b2"/>
<rect x="226.4" y="38.2" width="1" height="22.6" fill="#b2b2b2"/>
<rect x="258.7" y="38.2" width="1" height="22.6" fill="#b2b2b2"/>
<rect x="13.4" y="39.6" width="12.4" height="16.2" fill="#9adcf4" stroke="#777" stroke-width="0.8"/>
<rect x="13.9" y="50.6" width="3" height="4.8" fill="#1a9a1a"/>
<path d="M16.9 40.4 L25.4 39.8 V55.7 L16.9 58.7Z" fill="url(#gdoor)"/>
<path d="M5.6 44.6 H11 V41.9 L16.6 46.4 L11 51 V48.4 H5.6Z" fill="#e8203c"/>
<path d="M5.6 44.6 H11 V41.9 L13.4 43.8 L11 45.8 H5.6Z" fill="#f890a0" opacity="0.7"/>
<path d="M36.1 44.3 L49.2 41 L56.8 52.8 L41.6 58Z" fill="#2a4cd0" stroke="#2038a8" stroke-width="0.6" stroke-linejoin="round"/>
<path d="M40.3 43.4 L47.4 41.6 L49.2 45.2 L42.1 47Z" fill="#8c8c8c"/>
<path d="M42.1 50.1 L51 47.9 L53.7 53.2 L44.3 55.9Z" fill="#eeeeee"/>
<rect x="64" y="40.3" width="13.4" height="13.8" fill="#f4f4f4" stroke="#d8d8d8" stroke-width="0.8"/>
<circle cx="68" cy="46.5" r="6.1" fill="#efefef" stroke="#c2c2c2" stroke-width="1.7"/>
<line x1="73.2" y1="51.6" x2="80.2" y2="58" stroke="#b0b0b0" stroke-width="3" stroke-linecap="round"/><line x1="73.4" y1="51.8" x2="80" y2="57.8" stroke="#e0e0e0" stroke-width="1.2" stroke-linecap="round"/>
<rect x="99.9" y="39.2" width="12.2" height="3" fill="url(#gbar)"/>
<rect x="99.9" y="43.8" width="12.2" height="3.2" fill="url(#gbar)"/>
<rect x="99.9" y="48.1" width="12.2" height="3.3" fill="url(#gbar)"/>
<rect x="99.9" y="56.8" width="12.2" height="3.1" fill="url(#gbar)"/>
<path d="M91.1 52.8 H97.6 V51.3 L103.2 54.2 L97.6 57 V55.6 H91.1Z" fill="#f00000"/>
<path d="M136.8 42.6 C137.4 43.6 135 45.4 132 47 C128 49.4 124.6 53 122.6 56 C121.4 58 118.6 58.9 117 57.6 C115.8 56.4 117 53.6 119.4 51 C122.4 47.8 127 44.6 131 43 C133.4 42.1 136 41.8 136.8 42.6 Z" fill="url(#gx)" stroke="#a0a0a0" stroke-width="0.5"/>
<path d="M118.3 41.2 C122 41.5 126 45 128.5 47.5 C131.5 50.5 136 54 136.8 56.4 C137 57.6 135.6 57.8 134.5 57.2 C131 55 127.5 51.5 125 49 C122.5 46.5 119 44 118 42.2 Z" fill="url(#gx)" stroke="#a0a0a0" stroke-width="0.5"/>
<rect x="143.2" y="42.6" width="9" height="13" fill="#eeeeee" stroke="#d8d8d8" stroke-width="0.8"/>
<path d="M152 45 L158 45.4 L161.8 44 V53 L158 52 L152 53Z" fill="#e6e6e6" stroke="#d4d4d4" stroke-width="0.6"/>
<path d="M145 46 H151 M145 49 H151 M145 52 H151" stroke="#d6d6d6" stroke-width="0.9"/>
<circle cx="179.2" cy="46.1" r="6.3" fill="#d6ebff" stroke="#1e6ed2" stroke-width="1.5"/>
<line x1="184.4" y1="51.4" x2="191" y2="58" stroke="#2466c4" stroke-width="2.8" stroke-linecap="round"/>
<line x1="184.8" y1="51.8" x2="190.8" y2="57.8" stroke="#6ea6ea" stroke-width="1.2" stroke-linecap="round"/>
<rect x="200.2" y="37" width="25" height="24.6" fill="#cce4fc" stroke="#b4d4f4" stroke-width="0.6"/>
<line x1="214.1" y1="40" x2="214.1" y2="59" stroke="#6a8cff" stroke-width="1.2" stroke-dasharray="1.2 0.7"/>
<rect x="214.2" y="47.3" width="7.5" height="6.7" fill="#dceeff" stroke="#5a5a5a" stroke-width="0.9"/>
<circle cx="214.2" cy="47.3" r="0.9" fill="#e03030"/>
<circle cx="221.7" cy="47.3" r="0.9" fill="#e03030"/>
<circle cx="214.2" cy="54" r="0.9" fill="#e03030"/>
<circle cx="221.7" cy="54" r="0.9" fill="#e03030"/>
<path d="M204.4 59.4 L210 54.2" stroke="#10209c" stroke-width="1.5" stroke-linecap="round"/>
<path d="M213.8 50.6 L208 52.2 L211.8 56Z" fill="#10209c"/>
<text transform="translate(236.9 59.4) scale(0.86 1)" font-size="29" font-weight="bold" font-family='"Liberation Serif",serif' fill="#ff4a4a">?</text>
<path d="M0 0 H650 V490 H0Z M1 0.9 V488.7 H648.9 V0.9Z" fill="#333" fill-rule="evenodd"/>
</svg>
</body></html>
